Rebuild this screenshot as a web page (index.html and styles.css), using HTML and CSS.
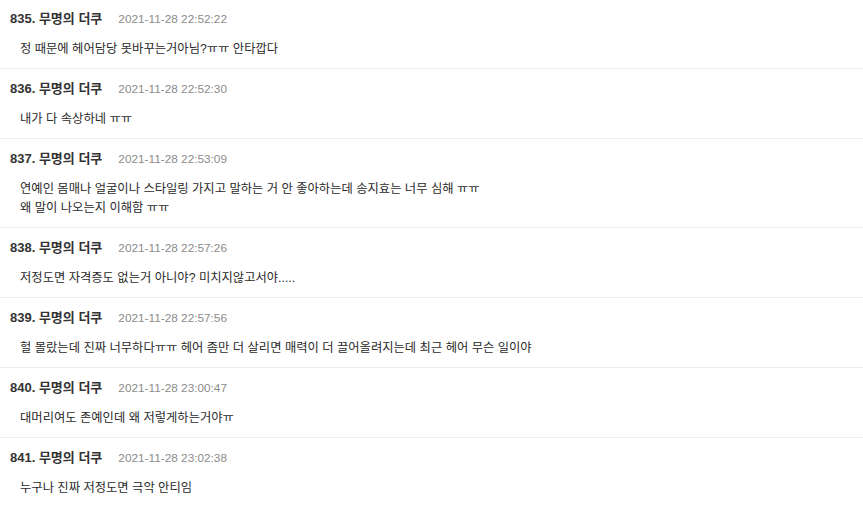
FILE: index.html
```html
<!DOCTYPE html>
<html lang="ko">
<head>
<meta charset="utf-8">
<link rel="stylesheet" href="styles.css">
</head>
<body>
<ul class="list">
  <li class="item">
    <div class="head"><span class="name">835. 무명의 더쿠</span><span class="date">2021-11-28 22:52:22</span></div>
    <div class="text">정 때문에 헤어담당 못바꾸는거아님?ㅠㅠ 안타깝다</div>
  </li>
  <li class="item">
    <div class="head"><span class="name">836. 무명의 더쿠</span><span class="date">2021-11-28 22:52:30</span></div>
    <div class="text">내가 다 속상하네 ㅠㅠ</div>
  </li>
  <li class="item">
    <div class="head"><span class="name">837. 무명의 더쿠</span><span class="date">2021-11-28 22:53:09</span></div>
    <div class="text">연예인 몸매나 얼굴이나 스타일링 가지고 말하는 거 안 좋아하는데 송지효는 너무 심해 ㅠㅠ<br>왜 말이 나오는지 이해함 ㅠㅠ</div>
  </li>
  <li class="item">
    <div class="head"><span class="name">838. 무명의 더쿠</span><span class="date">2021-11-28 22:57:26</span></div>
    <div class="text">저정도면 자격증도 없는거 아니야? 미치지않고서야.....</div>
  </li>
  <li class="item">
    <div class="head"><span class="name">839. 무명의 더쿠</span><span class="date">2021-11-28 22:57:56</span></div>
    <div class="text">헐 몰랐는데 진짜 너무하다ㅠㅠ 헤어 좀만 더 살리면 매력이 더 끌어올려지는데 최근 헤어 무슨 일이야</div>
  </li>
  <li class="item">
    <div class="head"><span class="name">840. 무명의 더쿠</span><span class="date">2021-11-28 23:00:47</span></div>
    <div class="text">대머리여도 존예인데 왜 저렇게하는거야ㅠ</div>
  </li>
  <li class="item">
    <div class="head"><span class="name">841. 무명의 더쿠</span><span class="date">2021-11-28 23:02:38</span></div>
    <div class="text">누구나 진짜 저정도면 극악 안티임</div>
  </li>
</ul>
</body>
</html>
```
FILE: styles.css
```css
html, body {
  margin: 0;
  padding: 0;
  background: #fff;
}
body {
  font-family: "Liberation Sans", "Noto Sans CJK KR", sans-serif;
  color: #333;
  overflow: hidden;
}
.list {
  list-style: none;
  margin: -1px 0 0 0;
  padding: 0;
}
.item {
  border-bottom: 1px solid #ececec;
  padding: 10px 0 9px 0;
}
.head {
  display: flex;
  align-items: center;
  height: 20px;
  padding-left: 10px;
  gap: 16px;
}
.name {
  font-size: 13px;
  font-weight: bold;
  color: #333;
  line-height: 20px;
}
.date {
  font-size: 11.8px;
  color: #8c8c8c;
  line-height: 20px;
}
.text {
  margin-top: 11px;
  padding-left: 20px;
  font-size: 12.3px;
  line-height: 19px;
  color: #2a2a2a;
}
```
